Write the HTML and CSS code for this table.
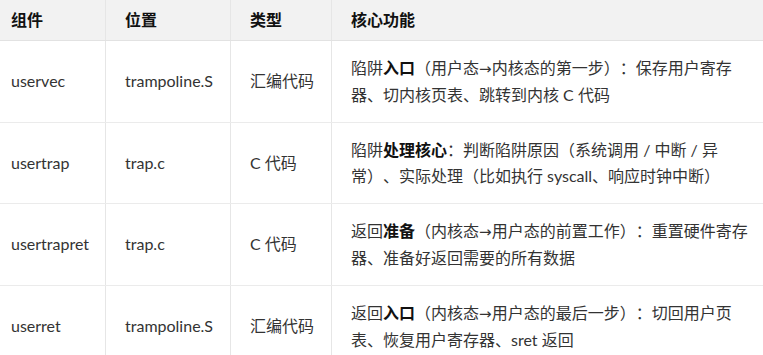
FILE: index.html
```html
<!DOCTYPE html>
<html lang="zh-CN">
<head>
    <meta charset="UTF-8">
    <meta name="viewport" content="width=device-width, initial-scale=1.0">
    <title>陷阱处理组件</title>
    <link rel="stylesheet" href="styles.css">
</head>
<body>
    <div class="table-wrap">
        <table class="trap-table">
            <colgroup>
                <col class="col-name">
                <col class="col-file">
                <col class="col-type">
                <col class="col-desc">
            </colgroup>
            <thead>
                <tr>
                    <th>组件</th>
                    <th>位置</th>
                    <th>类型</th>
                    <th>核心功能</th>
                </tr>
            </thead>
            <tbody>
                <tr>
                    <td>uservec</td>
                    <td>trampoline.S</td>
                    <td>汇编代码</td>
                    <td>陷阱<strong>入口</strong>（用户态<span class="arrow">→</span>内核态的第一步）：保存用户寄存器、切内核页表、跳转到内核 C 代码</td>
                </tr>
                <tr>
                    <td>usertrap</td>
                    <td>trap.c</td>
                    <td>C 代码</td>
                    <td>陷阱<strong>处理核心</strong>：判断陷阱原因（系统调用 / 中断 / 异常）、实际处理（比如执行 syscall、响应时钟中断）</td>
                </tr>
                <tr>
                    <td>usertrapret</td>
                    <td>trap.c</td>
                    <td>C 代码</td>
                    <td>返回<strong>准备</strong>（内核态<span class="arrow">→</span>用户态的前置工作）：重置硬件寄存器、准备好返回需要的所有数据</td>
                </tr>
                <tr>
                    <td>userret</td>
                    <td>trampoline.S</td>
                    <td>汇编代码</td>
                    <td>返回<strong>入口</strong>（内核态<span class="arrow">→</span>用户态的最后一步）：切回用户页表、恢复用户寄存器、sret 返回</td>
                </tr>
            </tbody>
        </table>
    </div>
</body>
</html>
```

FILE: styles.css
```css
body {
    margin: 0;
    background: #ffffff;
    font-family: Lato, "Noto Sans CJK SC", sans-serif;
    font-size: 16px;
    color: #333333;
    overflow: hidden;
    text-spacing-trim: space-all;
}

/* таблица обрезана слева, как на скриншоте */
.table-wrap {
    margin-left: -9px;
}

.trap-table {
    border-collapse: collapse;
    table-layout: fixed;
    width: 776px;
}

.col-name { width: 114px; }
.col-file { width: 125px; }
.col-type { width: 101px; }
.col-desc { width: 436px; }

.trap-table th,
.trap-table td {
    border-left: 1px solid #e6e6e6;
    border-right: 1px solid #e6e6e6;
    text-align: left;
    vertical-align: middle;
}

.trap-table th {
    height: 40px;
    padding: 0 12px 0 19px;
    box-sizing: border-box;
    background: #f2f2f2;
    border-bottom: 1px solid #e2e2e2;
    color: #111111;
    font-weight: bold;
    line-height: 20px;
}

.trap-table td {
    height: 80px;
    padding: 14px 12px 14px 19px;
    box-sizing: border-box;
    border-bottom: 1px solid #ebebeb;
    line-height: 26px;
}

.trap-table strong {
    color: #111111;
}

/* узкая стрелка, как в исходнике */
.arrow {
    font-family: "DejaVu Sans", sans-serif;
    font-size: 15px;
}
```
